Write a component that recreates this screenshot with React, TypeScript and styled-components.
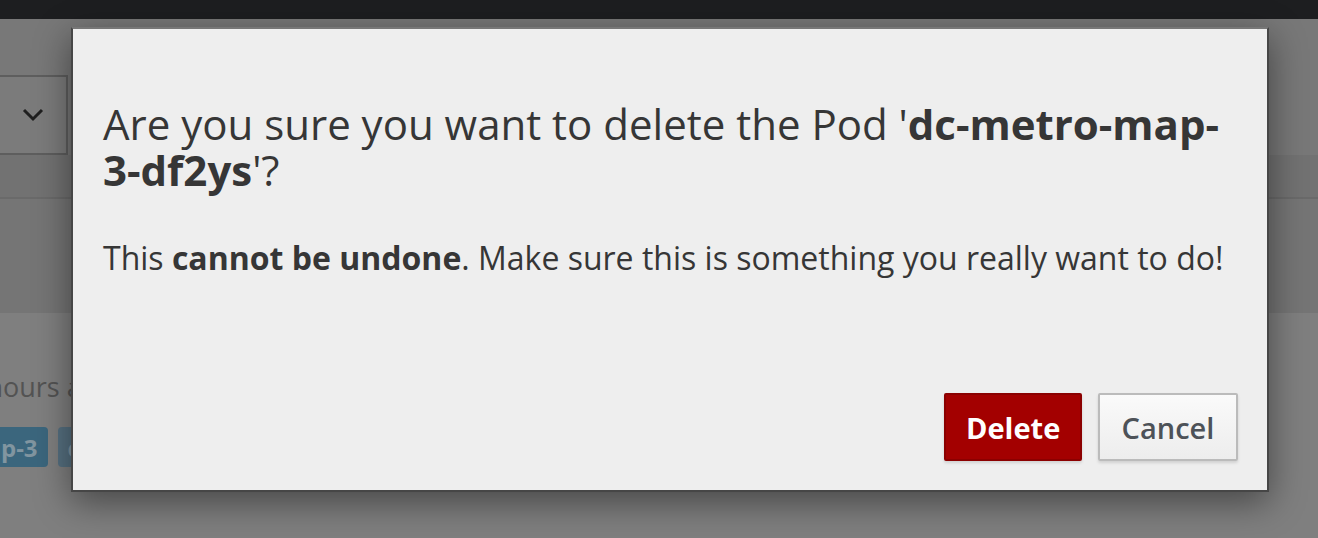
import styled, { createGlobalStyle } from 'styled-components';

const GlobalStyle = createGlobalStyle`
    html, body {
        margin: 0;
        padding: 0;
        overflow: hidden;
        background: #7f7f7f;
        font-family: "Open Sans", "Liberation Sans", sans-serif;
    }
`

export default function App() {
    return (
        <>
            <GlobalStyle/>
            <Page>
                <TopBar/>

                <Toolbar>
                    <SelectBox>
                        <svg width="22" height="14" viewBox="0 0 22 14">
                            <path d="M2 2 L11 11 L20 2" fill="none" stroke="#1f1f1f" strokeWidth="3"/>
                        </svg>
                    </SelectBox>
                </Toolbar>

                <Strip/>
                <Section/>

                <Content>
                    <Meta>2 hours ago</Meta>
                    <Labels>
                        <Label>dc-metro-map-3</Label>
                        <Label $muted>deployment</Label>
                    </Labels>
                </Content>

                <Modal role="dialog">
                    <Body>
                        <Title>
                            Are you sure you want to delete the Pod '<b>dc-metro-map-3-df2ys</b>'?
                        </Title>
                        <Text>
                            This <b>cannot be undone</b>. Make sure this is something you really want to do!
                        </Text>
                    </Body>
                    <Footer>
                        <DangerButton>Delete</DangerButton>
                        <DefaultButton>Cancel</DefaultButton>
                    </Footer>
                </Modal>
            </Page>
        </>
    )
}

const Page = styled.div`
    position: relative;
    width: 1318px;
    height: 538px;
    overflow: hidden;
    display: flex;
    flex-direction: column;
    background: #7f7f7f;
`

const TopBar = styled.div`
    height: 19px;
    flex-shrink: 0;
    background: #1d1e20;
`

const Toolbar = styled.div`
    height: 136px;
    flex-shrink: 0;
    padding-top: 56px;
    box-sizing: border-box;
    background: #787878;
`

const SelectBox = styled.div`
    width: 80px;
    height: 80px;
    margin-left: -12px;
    box-sizing: border-box;
    border: 2px solid #5e5e5e;
    background: #7b7b7b;
    display: flex;
    align-items: center;
    justify-content: center;
    padding-left: 10px;
`

const Strip = styled.div`
    height: 42px;
    flex-shrink: 0;
    background: #727272;
    border-bottom: 2px solid #6a6a6a;
`

const Section = styled.div`
    height: 114px;
    flex-shrink: 0;
    background: #757575;
`

const Content = styled.div`
    flex: 1;
    padding-top: 55px;
    margin-left: -26px;
    display: flex;
    flex-direction: column;
    gap: 21px;
`

const Meta = styled.div`
    margin-left: -10px;
    font-size: 27px;
    line-height: 38px;
    color: #535353;
`

const Labels = styled.div`
    display: flex;
    gap: 10px;
`

const Label = styled.span<{ $muted?: boolean }>`
    height: 40px;
    padding: 0 10px;
    border-radius: 4px;
    display: flex;
    align-items: center;
    font-size: 24px;
    font-weight: 700;
    color: #8195a0;
    background: ${p => p.$muted ? '#567080' : '#3b667d'};
    margin-left: ${p => p.$muted ? '0' : '-138px'};
`

const Modal = styled.div`
    position: absolute;
    left: 71px;
    top: 27px;
    width: 1198px;
    height: 465px;
    box-sizing: border-box;
    background: #eeeeee;
    border: 2px solid #464646;
    border-top-color: #777777;
    box-shadow: 0 10px 34px rgba(0, 0, 0, 0.45);
    display: flex;
    flex-direction: column;
    justify-content: space-between;
    padding: 0 29px 29px 30px;
`

const Body = styled.div`
    padding-top: 72px;
`

const Title = styled.h1`
    margin: 0;
    font-size: 42px;
    line-height: 46px;
    font-weight: 400;
    color: #363636;
    b {
        font-weight: 700;
    }
`

const Text = styled.p`
    margin: 44px 0 0;
    font-size: 32px;
    line-height: 42px;
    color: #363636;
    b {
        font-weight: 700;
    }
`

const Footer = styled.div`
    display: flex;
    justify-content: flex-end;
    gap: 16px;
`

const BaseButton = styled.button`
    height: 68px;
    box-sizing: border-box;
    border-radius: 2px;
    font-family: "Open Sans", "Liberation Sans", sans-serif;
    font-size: 29px;
    padding: 0 20px;
    cursor: pointer;
    box-shadow: 0 2px 3px rgba(0, 0, 0, 0.12);
`

const DangerButton = styled(BaseButton)`
    width: 138px;
    border: 2px solid #8b0000;
    background: #a30000;
    color: #ffffff;
    font-weight: 700;
`

const DefaultButton = styled(BaseButton)`
    width: 140px;
    border: 2px solid #bbbbbb;
    background: linear-gradient(to bottom, #fafafa, #ededed);
    color: #4d5258;
    font-weight: 600;
`
